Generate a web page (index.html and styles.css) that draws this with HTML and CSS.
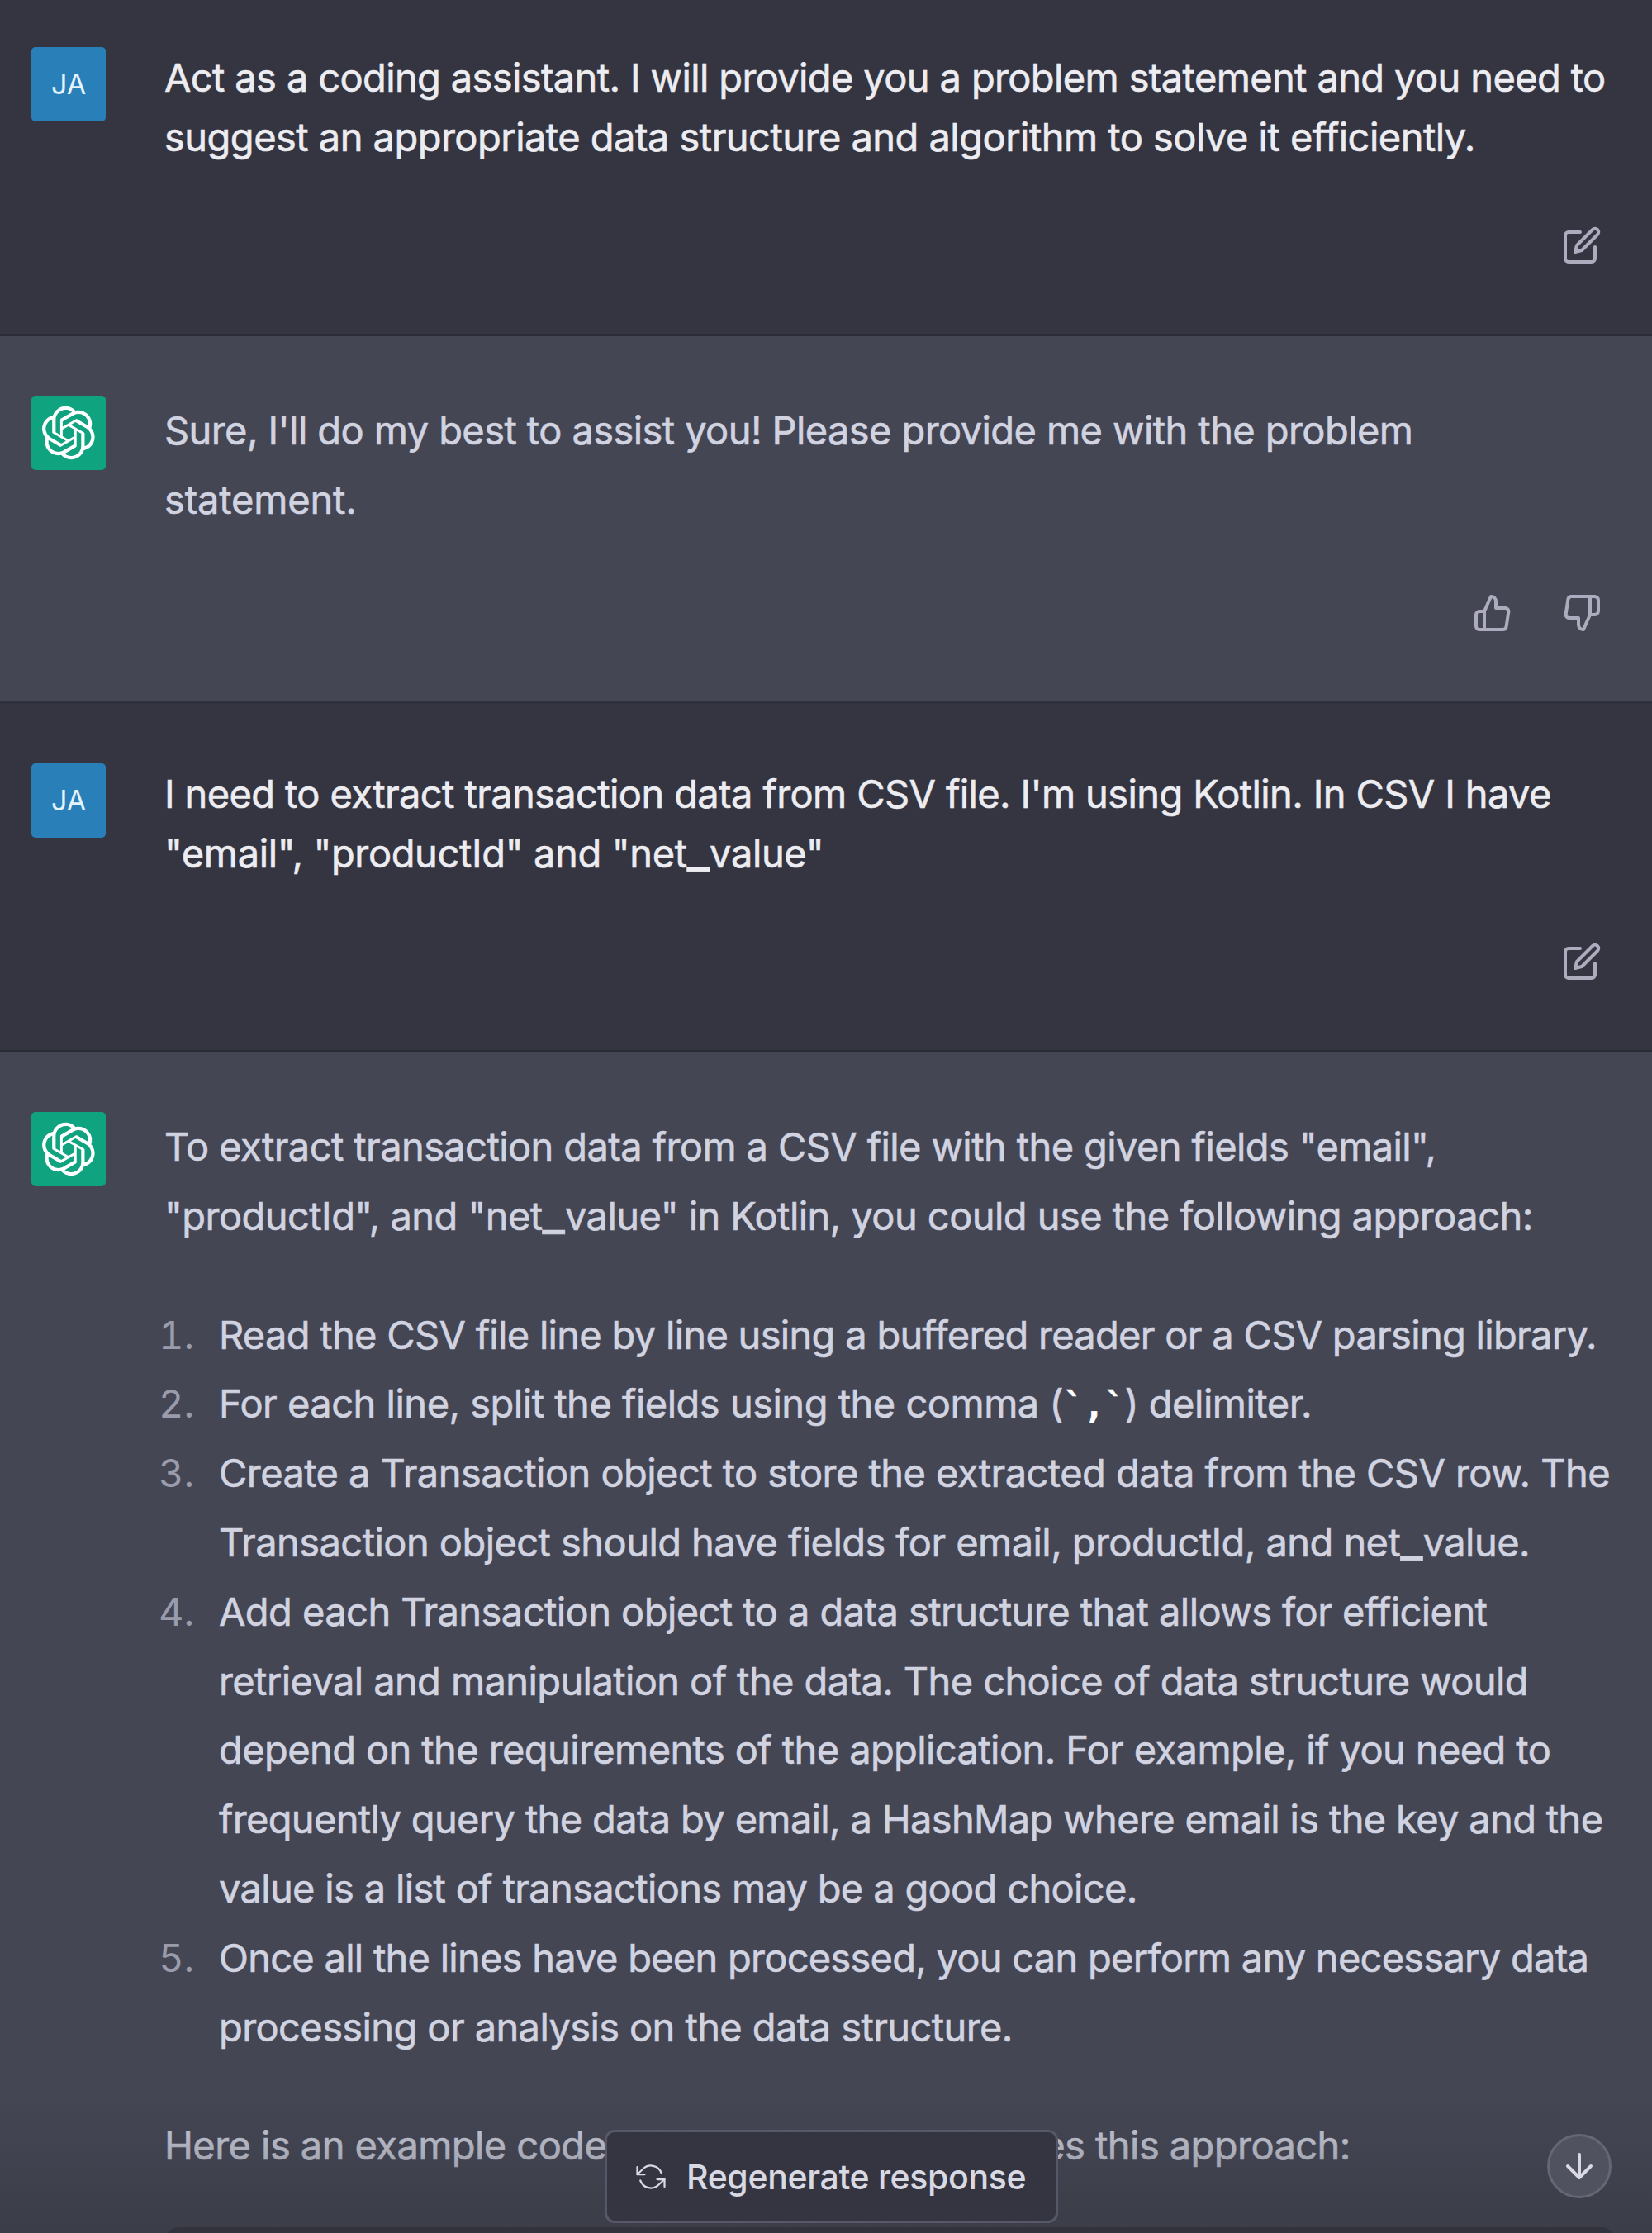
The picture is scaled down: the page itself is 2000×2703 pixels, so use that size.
FILE: index.html
```html
<!DOCTYPE html>
<html lang="en">
<head>
<meta charset="utf-8">
<title>Chat</title>
<link rel="stylesheet" href="styles.css">
</head>
<body>
<svg class="defs" aria-hidden="true">
  <symbol id="edit" viewBox="0 0 24 24"><path d="M11 4H4a2 2 0 0 0-2 2v14a2 2 0 0 0 2 2h14a2 2 0 0 0 2-2v-7"/><path d="M18.5 2.5a2.121 2.121 0 0 1 3 3L12 15l-4 1 1-4 9.5-9.5z"/></symbol>
  <symbol id="up" viewBox="0 0 24 24"><path d="M14 9V5a3 3 0 0 0-3-3l-4 9v11h11.28a2 2 0 0 0 2-1.7l1.38-9a2 2 0 0 0-2-2.3zM7 22H4a2 2 0 0 1-2-2v-7a2 2 0 0 1 2-2h3"/></symbol>
  <symbol id="down" viewBox="0 0 24 24"><path d="M10 15v4a3 3 0 0 0 3 3l4-9V2H5.72a2 2 0 0 0-2 1.7l-1.38 9a2 2 0 0 0 2 2.3zm7-13h2.67A2.31 2.31 0 0 1 22 4v7a2.31 2.31 0 0 1-2.33 2H17"/></symbol>
  <symbol id="logo" viewBox="0 0 41 41"><path d="M37.5324 16.8707C37.9808 15.5241 38.1363 14.0974 37.9886 12.6859C37.8409 11.2744 37.3934 9.91076 36.676 8.68622C35.6126 6.83404 33.9882 5.3676 32.0373 4.4985C30.0864 3.62941 27.9098 3.40259 25.8215 3.85078C24.8796 2.7893 23.7219 1.94125 22.4257 1.36341C21.1295 0.785575 19.7249 0.491269 18.3058 0.500197C16.1708 0.495044 14.0893 1.16803 12.3614 2.42214C10.6335 3.67624 9.34853 5.44666 8.6917 7.47815C7.30085 7.76286 5.98686 8.3414 4.8377 9.17505C3.68854 10.0087 2.73073 11.0782 2.02839 12.312C0.956464 14.1591 0.498905 16.2988 0.721698 18.4228C0.944492 20.5467 1.83612 22.5449 3.268 24.1293C2.81966 25.4759 2.66413 26.9026 2.81182 28.3141C2.95951 29.7256 3.40701 31.0892 4.12437 32.3138C5.18791 34.1659 6.8123 35.6322 8.76321 36.5013C10.7141 37.3704 12.8907 37.5973 14.9789 37.1492C15.9208 38.2107 17.0786 39.0587 18.3747 39.6366C19.6709 40.2144 21.0755 40.5087 22.4946 40.4998C24.6307 40.5054 26.7133 39.8321 28.4418 38.5772C30.1704 37.3223 31.4556 35.5506 32.1119 33.5179C33.5027 33.2332 34.8167 32.6547 35.9659 31.821C37.115 30.9874 38.0728 29.9178 38.7752 28.684C39.8458 26.8371 40.3023 24.6979 40.0789 22.5748C39.8556 20.4517 38.9639 18.4544 37.5324 16.8707ZM22.4978 37.8849C20.7443 37.8874 19.0459 37.2733 17.6994 36.1501C17.7601 36.117 17.8666 36.0586 17.936 36.0161L25.9004 31.4156C26.1003 31.3019 26.2663 31.137 26.3813 30.9378C26.4964 30.7386 26.5563 30.5124 26.5549 30.2825V19.0542L29.9213 20.998C29.9389 21.0068 29.9541 21.0198 29.9656 21.0359C29.977 21.052 29.9842 21.0707 29.9867 21.0902V30.3889C29.9842 32.375 29.1946 34.2791 27.7909 35.6841C26.3872 37.0892 24.4838 37.8806 22.4978 37.8849ZM6.39227 31.0064C5.51397 29.4888 5.19742 27.7107 5.49804 25.9832C5.55718 26.0187 5.66048 26.0818 5.73461 26.1244L13.699 30.7248C13.8975 30.8408 14.1233 30.902 14.3532 30.902C14.583 30.902 14.8088 30.8408 15.0073 30.7248L24.731 25.1103V28.9979C24.7321 29.0177 24.7283 29.0376 24.7199 29.0556C24.7115 29.0736 24.6988 29.0893 24.6829 29.1012L16.6317 33.7497C14.9096 34.7416 12.8643 35.0097 10.9447 34.4954C9.02506 33.9811 7.38785 32.7263 6.39227 31.0064ZM4.29707 13.6194C5.17156 12.0998 6.55279 10.9364 8.19885 10.3327C8.19885 10.4013 8.19491 10.5228 8.19491 10.6071V19.808C8.19351 20.0378 8.25334 20.2638 8.36823 20.4629C8.48312 20.6619 8.64893 20.8267 8.84863 20.9404L18.5723 26.5542L15.206 28.4979C15.1894 28.5089 15.1703 28.5155 15.1505 28.5173C15.1307 28.5191 15.1107 28.516 15.0924 28.5082L7.04046 23.8557C5.32135 22.8601 4.06716 21.2235 3.55289 19.3046C3.03862 17.3858 3.30624 15.3413 4.29707 13.6194ZM31.955 20.0556L22.2312 14.4411L25.5976 12.4981C25.6142 12.4872 25.6333 12.4805 25.6531 12.4787C25.6729 12.4769 25.6928 12.4801 25.7111 12.4879L33.7631 17.1364C34.9967 17.849 36.0017 18.8982 36.6606 20.1613C37.3194 21.4244 37.6047 22.849 37.4832 24.2684C37.3617 25.6878 36.8382 27.0432 35.9743 28.1759C35.1103 29.3086 33.9415 30.1717 32.6047 30.6641C32.6047 30.5947 32.6047 30.4733 32.6047 30.3889V21.188C32.6066 20.9586 32.5474 20.7328 32.4332 20.5338C32.319 20.3348 32.154 20.1698 31.955 20.0556ZM35.3055 15.0128C35.2464 14.9765 35.1431 14.9142 35.069 14.8717L27.1045 10.2712C26.906 10.1554 26.6803 10.0943 26.4504 10.0943C26.2206 10.0943 25.9948 10.1554 25.7963 10.2712L16.0726 15.8858V11.9982C16.0715 11.9783 16.0753 11.9585 16.0837 11.9405C16.0921 11.9225 16.1048 11.9068 16.1207 11.8949L24.1719 7.25025C25.4053 6.53903 26.8158 6.19376 28.2383 6.25482C29.6608 6.31589 31.0364 6.78077 32.2044 7.59508C33.3723 8.40939 34.2842 9.53945 34.8334 10.8531C35.3826 12.1667 35.5464 13.6095 35.3055 15.0128ZM14.2424 21.9419L10.8752 19.9981C10.8576 19.9893 10.8423 19.9763 10.8309 19.9602C10.8195 19.9441 10.8122 19.9254 10.8098 19.9058V10.6071C10.8107 9.18295 11.2173 7.78848 11.9819 6.58696C12.7466 5.38544 13.8377 4.42659 15.1275 3.82264C16.4173 3.21869 17.8524 2.99464 19.2649 3.1767C20.6775 3.35876 22.0089 3.93941 23.1034 4.85067C23.0427 4.88379 22.937 4.94215 22.8668 4.98473L14.9024 9.58517C14.7025 9.69878 14.5366 9.86356 14.4215 10.0626C14.3065 10.2616 14.2466 10.4877 14.2479 10.7175L14.2424 21.9419ZM16.071 17.9991L20.4018 15.4978L24.7325 17.9975V22.9985L20.4018 25.4983L16.071 22.9985V17.9991Z"/></symbol>
</svg>
<main class="chat">
  <section class="turn user">
    <div class="avatar">JA</div>
    <div class="content">
      <div class="text">
        <p class="a1">Act as a coding assistant. I will provide you a problem statement and you need to</p>
        <p class="a2">suggest an appropriate data structure and algorithm to solve it efficiently.</p>
      </div>
      <div class="actions"><svg class="icon"><use href="#edit"/></svg></div>
    </div>
  </section>
  <section class="turn bot">
    <div class="avatar"><svg class="logo"><use href="#logo"/></svg></div>
    <div class="content">
      <div class="text">
        <p class="b1">Sure, I'll do my best to assist you! Please provide me with the problem</p>
        <p class="b2">statement.</p>
      </div>
      <div class="actions"><svg class="icon"><use href="#up"/></svg><svg class="icon"><use href="#down"/></svg></div>
    </div>
  </section>
  <section class="turn user">
    <div class="avatar">JA</div>
    <div class="content">
      <div class="text">
        <p class="c1">I need to extract transaction data from CSV file. I'm using Kotlin. In CSV I have</p>
        <p class="c2">"email", "productId" and "net<span class="u">_</span>value"</p>
      </div>
      <div class="actions"><svg class="icon"><use href="#edit"/></svg></div>
    </div>
  </section>
  <section class="turn bot last">
    <div class="avatar"><svg class="logo"><use href="#logo"/></svg></div>
    <div class="content">
      <div class="text">
        <p class="d1">To extract transaction data from a CSV file with the given fields "email",</p>
        <p class="d2">"productId", and "net<span class="u">_</span>value" in Kotlin, you could use the following approach:</p>
      </div>
      <ol class="steps">
        <li><span class="num">1.</span><div><p class="e1">Read the CSV file line by line using a buffered reader or a CSV parsing library.</p></div></li>
        <li><span class="num">2.</span><div><p class="e2">For each line, split the fields using the comma (<code>`,`</code>) delimiter.</p></div></li>
        <li><span class="num">3.</span><div><p class="e3">Create a Transaction object to store the extracted data from the CSV row. The</p><p class="e4">Transaction object should have fields for email, productId, and net<span class="u">_</span>value.</p></div></li>
        <li><span class="num">4.</span><div><p class="e5">Add each Transaction object to a data structure that allows for efficient</p><p class="e6">retrieval and manipulation of the data. The choice of data structure would</p><p class="e7">depend on the requirements of the application. For example, if you need to</p><p class="e8">frequently query the data by email, a HashMap where email is the key and the</p><p class="e9">value is a list of transactions may be a good choice.</p></div></li>
        <li><span class="num">5.</span><div><p class="e10">Once all the lines have been processed, you can perform any necessary data</p><p class="e11">processing or analysis on the data structure.</p></div></li>
      </ol>
      <p class="f1">Here is an example code snippet that demonstrates this approach:</p>
      <div class="code-head"></div>
    </div>
  </section>
  <div class="fade"></div>
  <button class="regen"><svg viewBox="0 0 24 24"><polyline points="1 4 1 10 7 10"/><polyline points="23 20 23 14 17 14"/><path d="M20.49 9A9 9 0 0 0 5.64 5.64L1 10m22 4l-4.64 4.36A9 9 0 0 1 3.51 15"/></svg><span>Regenerate response</span></button>
  <button class="scroll"><svg class="icon" viewBox="0 0 24 24"><path d="M12 5v14M19 12l-7 7-7-7"/></svg></button>
</main>
</body>
</html>
```
FILE: styles.css
```css
* { box-sizing: border-box; }
body {
  margin: 0;
  background: #444654;
  font-family: Inter, "Liberation Sans", sans-serif;
  font-size: 47px;
}
p, ol { margin: 0; padding: 0; }
p { white-space: nowrap; letter-spacing: -.6px; -webkit-text-stroke: .6px currentColor; }
.defs { display: none; }
.chat { position: relative; width: 2000px; height: 2703px; overflow: hidden; }
.turn { display: flex; align-items: flex-start; gap: 71px; padding: 72px 0 0 38px; }
.turn.user { height: 422px; background: #343541; color: #ececf1; line-height: 71.8px; border-bottom: 3px solid #2b2b36; }
.turn.bot { height: 445px; color: #d1d3e0; line-height: 83.8px; border-bottom: 3px solid #30313c; }
.turn.user:first-child { height: 407px; padding-top: 57px; }
.turn.last { height: 1429px; border: 0; }
.avatar {
  flex: none; width: 90px; height: 90px; border-radius: 5px;
  display: flex; align-items: center; justify-content: center;
  background: #2980b9; color: #e6f3fb; font-size: 34px; line-height: 1;
}
.bot .avatar { background: #10a37f; }
.logo { width: 66px; height: 66px; fill: #fff; }
.content { flex: 1; }
.user .text { padding-top: 1px; }
.icon { width: 48px; height: 48px; fill: none; stroke: #acacbe; stroke-width: 2; stroke-linecap: round; stroke-linejoin: round; }
.actions { display: flex; justify-content: flex-end; gap: 60px; padding: 71px 61px 0 0; }
.steps { list-style: none; margin: 60px 0; }
.steps li { display: flex; }
.num { width: 67px; margin-left: -7px; margin-right: 6px; color: #9a9bab; font-variant-numeric: tabular-nums; }
code { font-family: "DejaVu Sans Mono", monospace; font-weight: 700; font-size: 42px; line-height: 0; color: #fff; }
.u { font-size: 60px; line-height: 0; letter-spacing: 0; }
.code-head { width: 1757px; height: 60px; margin-top: 57px; border-radius: 18px 18px 0 0; background: #2d2d38; }

/* Per-line tracking */
.a1 { letter-spacing: -.63px; }
.a2 { letter-spacing: -.53px; }
.b1 { letter-spacing: -.58px; }
.b2 { letter-spacing: -.17px; }
.c1 { letter-spacing: -.62px; }
.c2 { letter-spacing: -.37px; }
.d2, .e4 { letter-spacing: -.56px; }
.e1 { letter-spacing: -.7px; }
.e2 { letter-spacing: -.5px; }
.e3, .e5 { letter-spacing: -.56px; }
.e8 { letter-spacing: -.66px; }
.e9 { letter-spacing: -.67px; }
.e10 { letter-spacing: -.74px; }
.f1 { letter-spacing: -.56px; }

.fade { position: absolute; left: 0; right: 0; bottom: 0; height: 165px; background: linear-gradient(rgba(53,55,64,0), rgba(53,55,64,.6)); }
button { position: absolute; display: flex; align-items: center; padding: 0; font-family: inherit; }
.regen {
  left: 732px; top: 2578px; width: 549px; height: 113px; padding-left: 35px; gap: 25px;
  border: 3px solid #565869; border-radius: 12px; background: #343541;
  color: #d9d9e3; font-size: 41px; font-weight: 500; letter-spacing: -.36px; white-space: nowrap;
}
.regen svg { flex: none; width: 36px; height: 36px; fill: none; stroke: #d9d9e3; stroke-width: 1.5; stroke-linecap: round; stroke-linejoin: round; }
.scroll { left: 1873px; top: 2583px; width: 78px; height: 78px; justify-content: center; border: 3px solid #666775; border-radius: 50%; background: #51525f; }
.scroll .icon { stroke: #d9d9e3; }
```
